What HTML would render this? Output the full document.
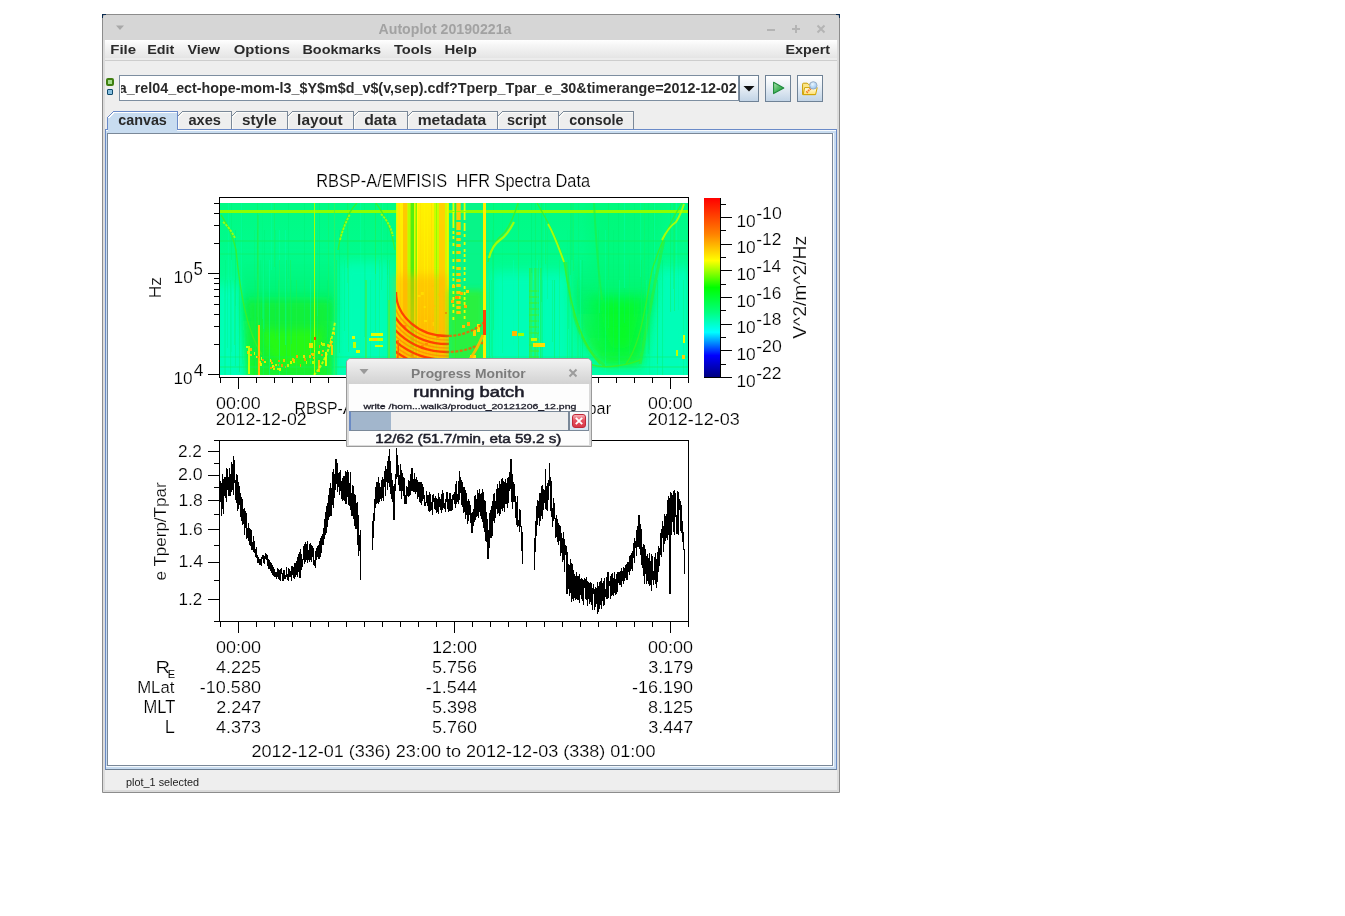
<!DOCTYPE html>
<html><head><meta charset="utf-8"><title>Autoplot 20190221a</title>
<style>
html,body{margin:0;padding:0;background:#fff;}
body{width:1345px;height:916px;position:relative;overflow:hidden;font-family:"Liberation Sans",sans-serif;}
.a{position:absolute;box-sizing:border-box;}
svg{position:absolute;left:0;top:0;overflow:visible;will-change:transform;}
svg text{font-family:"Liberation Sans",sans-serif;white-space:pre;}
</style></head><body>
<div class="a" style="left:102px;top:14px;width:738px;height:779px;border:1px solid #8c8c8c;background:#d6d6d6;border-radius:3px 3px 0 0;"></div><div class="a" style="left:102px;top:14px;width:4px;height:1px;background:#0a2a50"></div><div class="a" style="left:102px;top:14px;width:1px;height:4px;background:#0a2a50"></div><div class="a" style="left:836px;top:14px;width:4px;height:1px;background:#0a2a50"></div><div class="a" style="left:839px;top:14px;width:1px;height:4px;background:#0a2a50"></div><div class="a" style="left:105px;top:40px;width:732px;height:21px;background:linear-gradient(#ffffff,#f6f6f6 25%,#e4e4e4 92%,#ececec 92%);border-bottom:1px solid #cdcdcd"></div><div class="a" style="left:105px;top:61px;width:732px;height:729px;background:#eeeeee"></div><div class="a" style="left:103px;top:40px;width:2px;height:752px;background:#dcdcdc"></div><div class="a" style="left:837px;top:40px;width:2px;height:752px;background:#dcdcdc"></div><div class="a" style="left:103px;top:790px;width:736px;height:2px;background:#dadada"></div><div class="a" style="left:106px;top:78px;width:8px;height:8px;background:#a4dc8c;border:2px solid #3f7f10;border-radius:2px"></div><div class="a" style="left:107px;top:89px;width:6px;height:6px;background:#88c0e0;border:1.5px solid #0e4a6e;border-radius:1px"></div><div class="a" style="left:119px;top:75px;width:620px;height:26px;background:#fff;border:1px solid #7d8ea0;overflow:hidden"></div><div class="a" style="left:739px;top:75px;width:20px;height:27px;background:linear-gradient(#ffffff 0%,#eef3f8 35%,#c2d4e6 100%);border:1px solid #6f8296;"></div><div class="a" style="left:765px;top:75px;width:26px;height:27px;background:linear-gradient(#ffffff 0%,#eef3f8 35%,#c2d4e6 100%);border:1px solid #6f8296;"></div><div class="a" style="left:797px;top:75px;width:26px;height:27px;background:linear-gradient(#ffffff 0%,#eef3f8 35%,#c2d4e6 100%);border:1px solid #6f8296;"></div><div class="a" style="left:105px;top:129px;width:732px;height:641px;background:#c8dcf0;border:1px solid #6a8ac4;border-bottom-color:#6c7e92"></div><div class="a" style="left:106px;top:130px;width:730px;height:1px;background:#f4f8fc"></div><div class="a" style="left:107px;top:133px;width:726px;height:633px;background:#fff;border:1px solid #7a8898"></div><div class="a" style="left:106px;top:766px;width:728px;height:1px;background:#f4f8fc"></div><div class="a" style="left:833px;top:133px;width:1px;height:634px;background:#f4f8fc"></div><div class="a" style="left:105px;top:770px;width:732px;height:20px;background:#eeeeee"></div><svg width="1345" height="916" viewBox="0 0 1345 916"><text transform="translate(378.55,34.00) scale(0.9670,1)" font-size="14.64" font-weight="bold" fill="#a2a2a2">Autoplot 20190221a</text><path d="M767 30h8" stroke="#b4b4b4" stroke-width="2"/><path d="M792 29h8M796 25v8" stroke="#b4b4b4" stroke-width="2"/><path d="M817.5 25.5l7 7M824.5 25.5l-7 7" stroke="#b4b4b4" stroke-width="2"/><path d="M116 25.5h8l-4 4.5z" fill="#a8a8a8"/><text transform="translate(110.23,53.80) scale(1.1500,1)" font-size="13.04" font-weight="bold" fill="#2a2a2a">File</text><text transform="translate(147.17,53.80) scale(1.1013,1)" font-size="13.04" font-weight="bold" fill="#2a2a2a">Edit</text><text transform="translate(187.43,53.80) scale(1.1093,1)" font-size="13.04" font-weight="bold" fill="#2a2a2a">View</text><text transform="translate(233.80,53.80) scale(1.1412,1)" font-size="13.04" font-weight="bold" fill="#2a2a2a">Options</text><text transform="translate(302.46,53.80) scale(1.1055,1)" font-size="13.04" font-weight="bold" fill="#2a2a2a">Bookmarks</text><text transform="translate(393.95,53.80) scale(1.1228,1)" font-size="13.04" font-weight="bold" fill="#2a2a2a">Tools</text><text transform="translate(444.43,53.80) scale(1.1463,1)" font-size="13.04" font-weight="bold" fill="#2a2a2a">Help</text><text transform="translate(785.57,53.80) scale(1.0988,1)" font-size="13.04" font-weight="bold" fill="#2a2a2a">Expert</text><clipPath id="urlclip"><rect x="121" y="76" width="616" height="24"/></clipPath><g clip-path="url(#urlclip)"><text transform="translate(118.77,92.80) scale(1.0085,1)" font-size="14.21" font-weight="bold" fill="#2a2a2a">a_rel04_ect-hope-mom-l3_$Y$m$d_v$(v,sep).cdf?Tperp_Tpar_e_30&amp;timerange=2012-12-02</text></g><path d="M743.5 86h11l-5.5 5.5z" fill="#111"/><defs><linearGradient id="playg" x1="0" y1="0" x2="1" y2="1"><stop offset="0" stop-color="#b8e8b8"/><stop offset="0.5" stop-color="#4cb860"/><stop offset="1" stop-color="#2a9a40"/></linearGradient><linearGradient id="fold" x1="0" y1="0" x2="0" y2="1"><stop offset="0" stop-color="#fffde8"/><stop offset="1" stop-color="#ffe070"/></linearGradient><radialGradient id="lens" cx="0.4" cy="0.35" r="0.7"><stop offset="0" stop-color="#eaf6ff"/><stop offset="1" stop-color="#90c0f0"/></radialGradient></defs><path d="M773.6 82.3 V93.6 L783.8 88 Z" fill="url(#playg)" stroke="#1f8a3c" stroke-width="1.1" stroke-linejoin="round"/><path d="M802.6 94.6 V84.2 Q802.6 83.2 803.6 83.2 H807.2 L808.3 84.3 H815.2 V94.6 Z" fill="#fbe68a" stroke="#c99c00" stroke-width="1"/><path d="M803.2 94.6 L804.6 87.6 H817.2 L815.6 94.6 Z" fill="url(#fold)" stroke="#d2a400" stroke-width="1"/><path d="M806.6 92.6 L810.9 88.3" stroke="#f07a28" stroke-width="2.2" stroke-dasharray="1.4 0.8"/><circle cx="813.3" cy="85.4" r="3.7" fill="url(#lens)" stroke="#98acc4" stroke-width="1"/><g shape-rendering="crispEdges"><path d="M177.5 129 V116.5 L182.5 111.5 H231.5 V129" fill="#eeeeee" stroke="#7a8898" stroke-width="1"/><path d="M178.5 129 V117 L183 112.5 H230.5" fill="none" stroke="#fbfbf8" stroke-width="1"/><path d="M231.5 129 V116.5 L236.5 111.5 H287.5 V129" fill="#eeeeee" stroke="#7a8898" stroke-width="1"/><path d="M232.5 129 V117 L237 112.5 H286.5" fill="none" stroke="#fbfbf8" stroke-width="1"/><path d="M287.5 129 V116.5 L292.5 111.5 H353.5 V129" fill="#eeeeee" stroke="#7a8898" stroke-width="1"/><path d="M288.5 129 V117 L293 112.5 H352.5" fill="none" stroke="#fbfbf8" stroke-width="1"/><path d="M353.5 129 V116.5 L358.5 111.5 H407.5 V129" fill="#eeeeee" stroke="#7a8898" stroke-width="1"/><path d="M354.5 129 V117 L359 112.5 H406.5" fill="none" stroke="#fbfbf8" stroke-width="1"/><path d="M407.5 129 V116.5 L412.5 111.5 H497.5 V129" fill="#eeeeee" stroke="#7a8898" stroke-width="1"/><path d="M408.5 129 V117 L413 112.5 H496.5" fill="none" stroke="#fbfbf8" stroke-width="1"/><path d="M497.5 129 V116.5 L502.5 111.5 H558.5 V129" fill="#eeeeee" stroke="#7a8898" stroke-width="1"/><path d="M498.5 129 V117 L503 112.5 H557.5" fill="none" stroke="#fbfbf8" stroke-width="1"/><path d="M558.5 129 V116.5 L563.5 111.5 H633.5 V129" fill="#eeeeee" stroke="#7a8898" stroke-width="1"/><path d="M559.5 129 V117 L564 112.5 H632.5" fill="none" stroke="#fbfbf8" stroke-width="1"/><path d="M105 129.5 H107.5 V117.5 L113.5 111.5 H177.5 V129.5 H837" fill="#c8dcf0" stroke="#6a8ac8" stroke-width="1"/><path d="M108.5 130 V118 L114 112.5 H176.5" fill="none" stroke="#ffffff" stroke-width="1"/><rect x="108" y="118" width="69" height="15" fill="#c8dcf0"/><path d="M106 130.5 H108 M178 130.5 H836" stroke="#f8fbfe" stroke-width="1"/></g><text transform="translate(118.23,124.90) scale(1.0419,1)" font-size="13.77" font-weight="bold" fill="#2a2a2a">canvas</text><text transform="translate(188.46,124.90) scale(1.0612,1)" font-size="13.77" font-weight="bold" fill="#2a2a2a">axes</text><text transform="translate(241.96,124.90) scale(1.1104,1)" font-size="13.77" font-weight="bold" fill="#2a2a2a">style</text><text transform="translate(297.12,124.90) scale(1.1246,1)" font-size="13.77" font-weight="bold" fill="#2a2a2a">layout</text><text transform="translate(364.17,124.90) scale(1.1437,1)" font-size="13.77" font-weight="bold" fill="#2a2a2a">data</text><text transform="translate(417.68,124.90) scale(1.1355,1)" font-size="13.77" font-weight="bold" fill="#2a2a2a">metadata</text><text transform="translate(506.89,124.90) scale(1.0558,1)" font-size="13.77" font-weight="bold" fill="#2a2a2a">script</text><text transform="translate(569.33,124.90) scale(1.0405,1)" font-size="13.77" font-weight="bold" fill="#2a2a2a">console</text><text transform="translate(126.09,786.10) scale(1.0091,1)" font-size="10.76" font-weight="normal" fill="#222">plot_1 selected</text></svg><svg width="1345" height="916" viewBox="0 0 1345 916" shape-rendering="crispEdges"><defs><linearGradient id="cb" x1="0" y1="0" x2="0" y2="1"><stop offset="0" stop-color="#ff0000"/><stop offset="0.2" stop-color="#ff8000"/><stop offset="0.35" stop-color="#ffff00"/><stop offset="0.5" stop-color="#00ff00"/><stop offset="0.64" stop-color="#00ff80"/><stop offset="0.75" stop-color="#00ffff"/><stop offset="0.88" stop-color="#0000ff"/><stop offset="1" stop-color="#000080"/></linearGradient></defs><rect x="220" y="203" width="468" height="172" fill="#00fa90"/><defs><clipPath id="spc"><rect x="220" y="203" width="468" height="172"/></clipPath><filter id="b1" x="-50%" y="-50%" width="200%" height="200%"><feGaussianBlur stdDeviation="0.7"/></filter><filter id="b2" x="-50%" y="-50%" width="200%" height="200%"><feGaussianBlur stdDeviation="1.5"/></filter><filter id="b3" x="-50%" y="-50%" width="200%" height="200%"><feGaussianBlur stdDeviation="3"/></filter><filter id="b4" x="-50%" y="-50%" width="200%" height="200%"><feGaussianBlur stdDeviation="4"/></filter><filter id="b6" x="-50%" y="-50%" width="200%" height="200%"><feGaussianBlur stdDeviation="6"/></filter><filter id="b8" x="-50%" y="-50%" width="200%" height="200%"><feGaussianBlur stdDeviation="8"/></filter><linearGradient id="bgv" x1="0" y1="0" x2="0" y2="1"><stop offset="0" stop-color="#00fb84"/><stop offset="0.4" stop-color="#00fc90"/><stop offset="1" stop-color="#00fea8"/></linearGradient><linearGradient id="u1" x1="0" y1="0" x2="0" y2="1"><stop offset="0" stop-color="#00f270" stop-opacity="0"/><stop offset="0.4" stop-color="#00f060" stop-opacity="0.8"/><stop offset="1" stop-color="#20f820"/></linearGradient><linearGradient id="bandtop" x1="0" y1="0" x2="0" y2="1"><stop offset="0" stop-color="#fff200"/><stop offset="0.5" stop-color="#ffdc00"/><stop offset="1" stop-color="#ffb400"/></linearGradient></defs><g clip-path="url(#spc)" shape-rendering="auto"><rect x="220" y="203" width="468" height="172" fill="url(#bgv)"/><rect x="214" y="285" width="28" height="100" fill="#00ffbc" filter="url(#b6)" opacity="0.9"/><rect x="340" y="262" width="52" height="120" fill="#00ffbc" filter="url(#b6)" opacity="0.8"/><rect x="490" y="272" width="78" height="110" fill="#00ffbc" filter="url(#b6)" opacity="0.85"/><rect x="652" y="268" width="40" height="115" fill="#00ffbc" filter="url(#b6)" opacity="0.9"/><path d="M238 250 C242 310 244 345 248 380 L332 380 C334 325 336 300 338 250 Z" fill="url(#u1)" filter="url(#b3)"/><path d="M246 300 C250 340 252 360 254 380 L328 380 C330 335 332 320 332 300 Z" fill="#18f030" filter="url(#b4)" opacity="0.8"/><path d="M262 330 C265 350 272 362 285 366 L305 366 L316 352 C320 345 322 338 322 330 Z" fill="#30ff00" filter="url(#b4)" opacity="0.6"/><path d="M568 250 C572 310 580 348 606 366 L640 366 C648 340 652 300 664 250 Z" fill="url(#u1)" filter="url(#b4)" opacity="0.85"/><path d="M585 203 L662 203 C660 240 655 280 650 300 L592 300 C590 270 588 240 585 203 Z" fill="#00f870" filter="url(#b6)" opacity="0.45"/><path d="M588 295 C592 330 598 352 610 362 L638 358 C644 335 648 315 652 295 Z" fill="#00f840" filter="url(#b6)" opacity="0.6"/><path d="M600 300 C604 330 608 345 616 350 L630 346 C634 335 638 318 640 300 Z" fill="#10ff00" filter="url(#b6)" opacity="0.45"/><path d="M566 262 C570 310 578 345 605 366" stroke="#30f030" stroke-width="3" fill="none" opacity="0.6" filter="url(#b1)"/><path d="M664 240 C655 280 648 320 640 364" stroke="#30f030" stroke-width="3" fill="none" opacity="0.6" filter="url(#b1)"/><rect x="529" y="268" width="1.5" height="107" fill="#30f040" opacity="0.6"/><rect x="531" y="268" width="1.5" height="107" fill="#30f040" opacity="0.6"/><rect x="534" y="268" width="1.5" height="107" fill="#30f040" opacity="0.6"/><rect x="537" y="268" width="1.5" height="107" fill="#30f040" opacity="0.6"/><rect x="540" y="268" width="1.5" height="107" fill="#30f040" opacity="0.6"/><rect x="529" y="290" width="10" height="2" fill="#40f030" opacity="0.6"/><rect x="529" y="296" width="10" height="2" fill="#40f030" opacity="0.6"/><rect x="529" y="302" width="10" height="2" fill="#40f030" opacity="0.6"/><rect x="529" y="308" width="10" height="2" fill="#40f030" opacity="0.6"/><rect x="529" y="314" width="10" height="2" fill="#40f030" opacity="0.6"/><rect x="529" y="320" width="10" height="2" fill="#40f030" opacity="0.6"/><rect x="529" y="326" width="10" height="2" fill="#40f030" opacity="0.6"/><rect x="529" y="332" width="10" height="2" fill="#40f030" opacity="0.6"/><rect x="529" y="338" width="10" height="2" fill="#40f030" opacity="0.6"/><rect x="529" y="344" width="10" height="2" fill="#40f030" opacity="0.6"/><rect x="529" y="350" width="10" height="2" fill="#40f030" opacity="0.6"/><rect x="529" y="356" width="10" height="2" fill="#40f030" opacity="0.6"/><rect x="529" y="362" width="10" height="2" fill="#40f030" opacity="0.6"/><rect x="529" y="368" width="10" height="2" fill="#40f030" opacity="0.6"/><rect x="663" y="280" width="1" height="169" fill="#00ffb0" opacity="0.35"/><rect x="657" y="280" width="1" height="84" fill="#10f060" opacity="0.45"/><rect x="542" y="280" width="1" height="161" fill="#10f060" opacity="0.25"/><rect x="375" y="203" width="1" height="71" fill="#20f050" opacity="0.45"/><rect x="544" y="203" width="1" height="136" fill="#00ffb0" opacity="0.35"/><rect x="554" y="280" width="1" height="143" fill="#10f060" opacity="0.45"/><rect x="227" y="280" width="1" height="68" fill="#00f070" opacity="0.25"/><rect x="317" y="203" width="1" height="136" fill="#00f070" opacity="0.35"/><rect x="387" y="260" width="1" height="135" fill="#10f060" opacity="0.45"/><rect x="339" y="230" width="1" height="123" fill="#00f070" opacity="0.45"/><rect x="263" y="260" width="1" height="143" fill="#00f880" opacity="0.35"/><rect x="502" y="203" width="1" height="150" fill="#00f880" opacity="0.35"/><rect x="608" y="203" width="1" height="125" fill="#00f880" opacity="0.25"/><rect x="255" y="280" width="1" height="158" fill="#00f070" opacity="0.35"/><rect x="275" y="230" width="1" height="109" fill="#00f070" opacity="0.25"/><rect x="653" y="203" width="1" height="87" fill="#10f060" opacity="0.25"/><rect x="582" y="260" width="1" height="113" fill="#00f070" opacity="0.45"/><rect x="542" y="203" width="1" height="159" fill="#00f880" opacity="0.35"/><rect x="264" y="230" width="1" height="102" fill="#00f070" opacity="0.35"/><rect x="608" y="203" width="1" height="77" fill="#10f060" opacity="0.45"/><rect x="271" y="203" width="1" height="67" fill="#00ffb0" opacity="0.35"/><rect x="310" y="280" width="1" height="84" fill="#00ffb0" opacity="0.45"/><rect x="317" y="203" width="1" height="113" fill="#00ffb0" opacity="0.25"/><rect x="328" y="203" width="1" height="94" fill="#20f050" opacity="0.35"/><rect x="673" y="203" width="1" height="86" fill="#10f060" opacity="0.35"/><rect x="657" y="280" width="1" height="142" fill="#20f050" opacity="0.25"/><rect x="241" y="203" width="1" height="87" fill="#00ffb0" opacity="0.35"/><rect x="224" y="280" width="1" height="102" fill="#00f880" opacity="0.35"/><rect x="257" y="203" width="1" height="71" fill="#10f060" opacity="0.45"/><rect x="545" y="203" width="1" height="61" fill="#20f050" opacity="0.35"/><rect x="538" y="260" width="1" height="76" fill="#20f050" opacity="0.35"/><rect x="646" y="280" width="1" height="77" fill="#00ffb0" opacity="0.25"/><rect x="541" y="203" width="1" height="99" fill="#10f060" opacity="0.45"/><rect x="347" y="203" width="1" height="80" fill="#20f050" opacity="0.25"/><rect x="571" y="260" width="1" height="172" fill="#00ffb0" opacity="0.45"/><rect x="260" y="260" width="1" height="66" fill="#00f070" opacity="0.25"/><rect x="239" y="280" width="1" height="92" fill="#10f060" opacity="0.45"/><rect x="580" y="260" width="1" height="92" fill="#00ffb0" opacity="0.45"/><rect x="370" y="280" width="1" height="82" fill="#00f070" opacity="0.25"/><rect x="336" y="260" width="1" height="131" fill="#20f050" opacity="0.45"/><rect x="257" y="230" width="1" height="87" fill="#10f060" opacity="0.45"/><rect x="228" y="203" width="1" height="94" fill="#00ffb0" opacity="0.35"/><rect x="347" y="203" width="1" height="65" fill="#10f060" opacity="0.35"/><rect x="491" y="280" width="1" height="76" fill="#00f070" opacity="0.35"/><rect x="290" y="260" width="1" height="102" fill="#20f050" opacity="0.45"/><rect x="291" y="280" width="1" height="64" fill="#00f070" opacity="0.35"/><rect x="686" y="230" width="1" height="149" fill="#00f880" opacity="0.25"/><rect x="230" y="280" width="1" height="141" fill="#00f070" opacity="0.35"/><rect x="254" y="230" width="1" height="100" fill="#10f060" opacity="0.25"/><rect x="258" y="260" width="1" height="129" fill="#00f880" opacity="0.45"/><rect x="242" y="203" width="1" height="161" fill="#00f880" opacity="0.35"/><rect x="263" y="260" width="1" height="69" fill="#00ffb0" opacity="0.25"/><rect x="662" y="260" width="1" height="133" fill="#00f070" opacity="0.45"/><rect x="559" y="260" width="1" height="108" fill="#20f050" opacity="0.25"/><rect x="531" y="203" width="1" height="70" fill="#00f070" opacity="0.45"/><rect x="279" y="230" width="1" height="172" fill="#00ffb0" opacity="0.45"/><rect x="389" y="260" width="1" height="154" fill="#20f050" opacity="0.35"/><rect x="649" y="280" width="1" height="70" fill="#20f050" opacity="0.45"/><rect x="235" y="230" width="1" height="136" fill="#00f070" opacity="0.35"/><rect x="231" y="203" width="1" height="149" fill="#00f070" opacity="0.35"/><rect x="619" y="280" width="1" height="144" fill="#00ffb0" opacity="0.35"/><rect x="678" y="203" width="1" height="107" fill="#00f880" opacity="0.25"/><rect x="567" y="280" width="1" height="85" fill="#20f050" opacity="0.25"/><rect x="605" y="230" width="1" height="144" fill="#00ffb0" opacity="0.35"/><rect x="676" y="203" width="1" height="101" fill="#00ffb0" opacity="0.45"/><rect x="348" y="203" width="1" height="141" fill="#00ffb0" opacity="0.25"/><rect x="670" y="203" width="1" height="109" fill="#10f060" opacity="0.45"/><rect x="382" y="203" width="1" height="77" fill="#10f060" opacity="0.35"/><rect x="648" y="203" width="1" height="151" fill="#00f070" opacity="0.35"/><rect x="640" y="203" width="1" height="74" fill="#00ffb0" opacity="0.35"/><rect x="360" y="203" width="1" height="166" fill="#00ffb0" opacity="0.35"/><rect x="540" y="280" width="1" height="123" fill="#00f880" opacity="0.45"/><rect x="649" y="280" width="1" height="117" fill="#00f880" opacity="0.25"/><rect x="644" y="203" width="1" height="95" fill="#20f050" opacity="0.25"/><rect x="567" y="230" width="1" height="133" fill="#00f880" opacity="0.35"/><rect x="552" y="280" width="1" height="62" fill="#10f060" opacity="0.35"/><rect x="317" y="203" width="1" height="158" fill="#00f880" opacity="0.25"/><rect x="618" y="203" width="1" height="161" fill="#00f070" opacity="0.45"/><rect x="279" y="260" width="1" height="73" fill="#20f050" opacity="0.45"/><rect x="547" y="230" width="1" height="69" fill="#10f060" opacity="0.25"/><rect x="641" y="260" width="1" height="92" fill="#10f060" opacity="0.45"/><rect x="225" y="260" width="1" height="128" fill="#00f070" opacity="0.25"/><rect x="335" y="230" width="1" height="159" fill="#00f880" opacity="0.45"/><rect x="577" y="280" width="1" height="124" fill="#20f050" opacity="0.25"/><rect x="654" y="203" width="1" height="71" fill="#00ffb0" opacity="0.45"/><rect x="286" y="260" width="1" height="118" fill="#10f060" opacity="0.45"/><rect x="674" y="203" width="1" height="108" fill="#20f050" opacity="0.45"/><rect x="554" y="280" width="1" height="161" fill="#00f880" opacity="0.35"/><rect x="387" y="203" width="1" height="72" fill="#00f070" opacity="0.25"/><rect x="344" y="260" width="1" height="71" fill="#00f880" opacity="0.45"/><rect x="624" y="230" width="1" height="93" fill="#00f070" opacity="0.35"/><rect x="262" y="203" width="1" height="116" fill="#00f880" opacity="0.45"/><rect x="613" y="230" width="1" height="122" fill="#00f070" opacity="0.25"/><rect x="634" y="203" width="1" height="114" fill="#00f070" opacity="0.25"/><rect x="492" y="230" width="1" height="147" fill="#10f060" opacity="0.35"/><rect x="296" y="280" width="1" height="152" fill="#20f050" opacity="0.45"/><rect x="572" y="260" width="1" height="172" fill="#00ffb0" opacity="0.45"/><rect x="572" y="203" width="1" height="157" fill="#10f060" opacity="0.35"/><rect x="489" y="280" width="1" height="97" fill="#20f050" opacity="0.45"/><rect x="304" y="280" width="1" height="125" fill="#20f050" opacity="0.35"/><rect x="379" y="260" width="1" height="168" fill="#20f050" opacity="0.25"/><rect x="375" y="203" width="1" height="129" fill="#20f050" opacity="0.35"/><rect x="513" y="260" width="1" height="85" fill="#00ffb0" opacity="0.45"/><rect x="278" y="280" width="1" height="60" fill="#20f050" opacity="0.35"/><rect x="234" y="280" width="1" height="65" fill="#20f050" opacity="0.35"/><rect x="498" y="280" width="1" height="75" fill="#00ffb0" opacity="0.25"/><rect x="573" y="203" width="1" height="68" fill="#20f050" opacity="0.35"/><rect x="629" y="260" width="1" height="94" fill="#10f060" opacity="0.35"/><rect x="285" y="230" width="1" height="115" fill="#00ffb0" opacity="0.45"/><rect x="382" y="203" width="1" height="84" fill="#00ffb0" opacity="0.45"/><rect x="235" y="230" width="1" height="76" fill="#00f070" opacity="0.25"/><rect x="319" y="203" width="1" height="89" fill="#00f070" opacity="0.45"/><rect x="365" y="230" width="1" height="152" fill="#00f880" opacity="0.25"/><rect x="537" y="260" width="1" height="73" fill="#00ffb0" opacity="0.45"/><rect x="518" y="203" width="1" height="169" fill="#20f050" opacity="0.45"/><rect x="348" y="203" width="1" height="149" fill="#20f050" opacity="0.35"/><rect x="231" y="260" width="1" height="141" fill="#00ffb0" opacity="0.45"/><rect x="535" y="203" width="1" height="128" fill="#10f060" opacity="0.45"/><rect x="493" y="203" width="1" height="127" fill="#10f060" opacity="0.45"/><rect x="533" y="280" width="1" height="169" fill="#10f060" opacity="0.25"/><rect x="599" y="230" width="1" height="83" fill="#00f880" opacity="0.45"/><rect x="381" y="203" width="1" height="87" fill="#10f060" opacity="0.25"/><rect x="288" y="203" width="1" height="76" fill="#00f070" opacity="0.35"/><rect x="269" y="260" width="1" height="166" fill="#00ffb0" opacity="0.45"/><rect x="624" y="203" width="1" height="85" fill="#00ffb0" opacity="0.45"/><rect x="570" y="203" width="1" height="72" fill="#10f060" opacity="0.45"/><rect x="569" y="230" width="1" height="165" fill="#00f880" opacity="0.25"/><rect x="580" y="280" width="1" height="141" fill="#00f880" opacity="0.45"/><rect x="571" y="203" width="1" height="162" fill="#00f070" opacity="0.35"/><rect x="274" y="203" width="1" height="64" fill="#20f050" opacity="0.45"/><rect x="683" y="280" width="1" height="121" fill="#10f060" opacity="0.25"/><rect x="314" y="203" width="1" height="86" fill="#10f060" opacity="0.25"/><rect x="364" y="203" width="1" height="134" fill="#00f070" opacity="0.25"/><rect x="568" y="260" width="1" height="69" fill="#00f070" opacity="0.35"/><rect x="327" y="280" width="1" height="107" fill="#00f070" opacity="0.45"/><rect x="578" y="203" width="1" height="168" fill="#10f060" opacity="0.25"/><rect x="598" y="230" width="1" height="111" fill="#10f060" opacity="0.45"/><rect x="304" y="203" width="1" height="125" fill="#00f070" opacity="0.35"/><rect x="220" y="240" width="468" height="2" fill="#10f060" opacity="0.5"/><rect x="220" y="253" width="468" height="2" fill="#10f060" opacity="0.3"/><rect x="220" y="356" width="468" height="2" fill="#10f060" opacity="0.25"/><rect x="220" y="366" width="468" height="2" fill="#10f060" opacity="0.35"/><rect x="220" y="210" width="468" height="3" fill="#8cff00"/><path d="M221 215 C226 222 232 232 236 250 C240 290 246 330 262 355" stroke="#40f020" stroke-width="1.4" fill="none" opacity="0.8"/><path d="M223 222 C228 226 232 232 235 238" stroke="#b0ff00" stroke-width="1.8" fill="none" opacity="0.9" stroke-dasharray="2.5 1"/><path d="M338 250 C342 225 350 210 357 203" stroke="#40f020" stroke-width="1.4" fill="none" opacity="0.8"/><path d="M340 240 C343 228 347 220 350 214" stroke="#b0ff00" stroke-width="1.8" fill="none" opacity="0.9" stroke-dasharray="2.5 1"/><path d="M376 203 C382 212 390 222 395 250" stroke="#40f020" stroke-width="1.4" fill="none" opacity="0.8"/><path d="M381 214 C385 218 390 224 393 236" stroke="#b0ff00" stroke-width="1.8" fill="none" opacity="0.9" stroke-dasharray="2.5 1"/><path d="M488 262 C490 250 495 240 505 232 C512 222 516 210 518 203" stroke="#40f020" stroke-width="1.4" fill="none" opacity="0.8"/><path d="M489 258 C491 250 494 244 500 240 C506 236 510 230 514 222" stroke="#b0ff00" stroke-width="2.2" fill="none" opacity="0.9"/><path d="M537 203 C548 222 558 240 564 262 C570 300 578 340 600 364" stroke="#40f020" stroke-width="1.4" fill="none" opacity="0.8"/><path d="M548 224 C554 234 558 246 564 262" stroke="#b8ff00" stroke-width="1.8" fill="none" opacity="0.9"/><path d="M682 203 C670 222 660 245 652 270 C645 310 640 345 626 364" stroke="#40f020" stroke-width="1.4" fill="none" opacity="0.8"/><path d="M662 240 C666 232 670 226 676 222 C680 216 682 210 684 204" stroke="#b8ff00" stroke-width="2" fill="none" opacity="0.9"/><path d="M594 203 C596 240 598 270 602 300" stroke="#20f040" stroke-width="2" fill="none" opacity="0.6"/><path d="M530 268 L530 375 M536 268 L536 375" stroke="#30f040" stroke-width="1.2" fill="none" opacity="0.7"/><path d="M590 364 C600 368 620 368 640 360" stroke="#40f020" stroke-width="1.5" fill="none" opacity="0.8"/><rect x="314" y="203" width="1" height="172" fill="#a8ff00"/><rect x="257" y="215" width="2" height="160" fill="#30f030" opacity="0.35"/><rect x="258" y="325" width="2" height="50" fill="#ffc000" filter="url(#b1)"/><rect x="334" y="203" width="1" height="172" fill="#40f050" opacity="0.6"/><rect x="300" y="364" width="1" height="3" fill="#ff9800" opacity="0.9"/><rect x="314" y="350" width="1" height="2" fill="#ffe000" opacity="0.9"/><rect x="277" y="368" width="2" height="2" fill="#c8ff00" opacity="0.9"/><rect x="296" y="355" width="2" height="3" fill="#e8ff00" opacity="0.9"/><rect x="260" y="362" width="1" height="2" fill="#c8ff00" opacity="0.9"/><rect x="256" y="356" width="1" height="2" fill="#e8ff00" opacity="0.9"/><rect x="332" y="332" width="1" height="2" fill="#e8ff00" opacity="0.9"/><rect x="270" y="367" width="2" height="2" fill="#ff9800" opacity="0.9"/><rect x="260" y="363" width="2" height="3" fill="#e8ff00" opacity="0.9"/><rect x="246" y="346" width="2" height="2" fill="#e8ff00" opacity="0.9"/><rect x="274" y="366" width="1" height="3" fill="#ff9800" opacity="0.9"/><rect x="250" y="348" width="2" height="3" fill="#ffc000" opacity="0.9"/><rect x="261" y="357" width="1" height="3" fill="#e8ff00" opacity="0.9"/><rect x="332" y="332" width="2" height="2" fill="#ffc000" opacity="0.9"/><rect x="293" y="361" width="2" height="2" fill="#c8ff00" opacity="0.9"/><rect x="285" y="366" width="1" height="2" fill="#ff9800" opacity="0.9"/><rect x="312" y="361" width="2" height="3" fill="#c8ff00" opacity="0.9"/><rect x="324" y="343" width="1" height="3" fill="#c8ff00" opacity="0.9"/><rect x="321" y="342" width="1" height="3" fill="#ffe000" opacity="0.9"/><rect x="290" y="361" width="2" height="3" fill="#e8ff00" opacity="0.9"/><rect x="327" y="344" width="2" height="3" fill="#ffc000" opacity="0.9"/><rect x="272" y="365" width="2" height="3" fill="#e8ff00" opacity="0.9"/><rect x="334" y="332" width="1" height="3" fill="#ffe000" opacity="0.9"/><rect x="247" y="351" width="2" height="3" fill="#ffc000" opacity="0.9"/><rect x="303" y="355" width="2" height="3" fill="#ffe000" opacity="0.9"/><rect x="319" y="345" width="1" height="3" fill="#ff9800" opacity="0.9"/><rect x="254" y="352" width="1" height="3" fill="#e8ff00" opacity="0.9"/><rect x="271" y="360" width="1" height="3" fill="#ff9800" opacity="0.9"/><rect x="330" y="343" width="2" height="3" fill="#ffc000" opacity="0.9"/><rect x="270" y="359" width="1" height="3" fill="#e8ff00" opacity="0.9"/><rect x="318" y="351" width="2" height="3" fill="#e8ff00" opacity="0.9"/><rect x="322" y="343" width="2" height="3" fill="#c8ff00" opacity="0.9"/><rect x="250" y="354" width="2" height="2" fill="#ffc000" opacity="0.9"/><rect x="312" y="353" width="2" height="3" fill="#ffc000" opacity="0.9"/><rect x="313" y="357" width="2" height="2" fill="#ffc000" opacity="0.9"/><rect x="296" y="355" width="2" height="3" fill="#ff9800" opacity="0.9"/><rect x="304" y="358" width="2" height="3" fill="#ff9800" opacity="0.9"/><rect x="275" y="364" width="2" height="2" fill="#c8ff00" opacity="0.9"/><rect x="322" y="350" width="2" height="2" fill="#ffc000" opacity="0.9"/><rect x="292" y="358" width="2" height="3" fill="#ffc000" opacity="0.9"/><rect x="306" y="361" width="1" height="3" fill="#c8ff00" opacity="0.9"/><rect x="271" y="362" width="2" height="2" fill="#ffc000" opacity="0.9"/><rect x="262" y="359" width="2" height="2" fill="#ff9800" opacity="0.9"/><rect x="264" y="361" width="2" height="2" fill="#ffe000" opacity="0.9"/><rect x="259" y="361" width="2" height="2" fill="#ffe000" opacity="0.9"/><rect x="287" y="364" width="2" height="3" fill="#c8ff00" opacity="0.9"/><rect x="278" y="364" width="1" height="2" fill="#ff9800" opacity="0.9"/><rect x="309" y="355" width="2" height="3" fill="#ffc000" opacity="0.9"/><rect x="321" y="354" width="2" height="2" fill="#ff9800" opacity="0.9"/><rect x="293" y="359" width="2" height="3" fill="#ffc000" opacity="0.9"/><rect x="330" y="338" width="1" height="3" fill="#ffc000" opacity="0.9"/><rect x="281" y="364" width="2" height="3" fill="#ff9800" opacity="0.9"/><rect x="257" y="356" width="2" height="2" fill="#ff9800" opacity="0.9"/><rect x="331" y="341" width="2" height="2" fill="#ffc000" opacity="0.9"/><rect x="278" y="360" width="2" height="2" fill="#ff9800" opacity="0.9"/><rect x="273" y="367" width="2" height="3" fill="#ff9800" opacity="0.9"/><rect x="283" y="359" width="2" height="3" fill="#ffc000" opacity="0.9"/><rect x="279" y="368" width="2" height="3" fill="#e8ff00" opacity="0.9"/><rect x="311" y="353" width="2" height="2" fill="#ffc000" opacity="0.9"/><rect x="273" y="368" width="2" height="2" fill="#c8ff00" opacity="0.9"/><rect x="314" y="337" width="2" height="3" fill="#ff3000" opacity="0.9"/><rect x="309" y="343" width="4" height="5" fill="#ffe000" opacity="0.9"/><rect x="248" y="346" width="2" height="28" fill="#d0ff00" opacity="0.9"/><rect x="318" y="360" width="2" height="12" fill="#ffc000" opacity="0.9"/><rect x="325" y="352" width="2" height="14" fill="#e8ff00" opacity="0.9"/><rect x="331" y="345" width="2" height="10" fill="#ffd000" opacity="0.9"/><path d="M314 375 C322 366 330 352 335 322" stroke="#e8ff00" stroke-width="2" fill="none" opacity="0.8" stroke-dasharray="3 1.5"/><rect x="352" y="336" width="3" height="3" fill="#e0ff00"/><rect x="353" y="342" width="3" height="6" fill="#c0ff00"/><rect x="356" y="350" width="4" height="3" fill="#e0ff00"/><rect x="512" y="331" width="5" height="5" fill="#ffb800"/><rect x="518" y="333" width="6" height="3" fill="#a0ff00"/><rect x="533" y="343" width="12" height="4" fill="#ffe000"/><rect x="531" y="338" width="6" height="3" fill="#c8ff00"/><rect x="544" y="372" width="2" height="3" fill="#ffd000"/><rect x="683" y="335" width="2" height="8" fill="#e0ff00"/><rect x="682" y="355" width="3" height="4" fill="#ffd000"/><rect x="676" y="350" width="2" height="6" fill="#c0ff00"/><rect x="371" y="333" width="12" height="3" fill="#e0ff00"/><rect x="369" y="338" width="14" height="3" fill="#c0ff00"/><rect x="375" y="345" width="8" height="2" fill="#d0ff00"/><rect x="373" y="338" width="4" height="3" fill="#ffd000"/><rect x="365" y="280" width="2" height="95" fill="#40f040" opacity="0.6"/><rect x="388" y="300" width="2" height="75" fill="#60f020" opacity="0.6"/><rect x="396" y="203" width="53" height="172" fill="url(#bandtop)"/><linearGradient id="sfade" x1="0" y1="0" x2="0" y2="1"><stop offset="0" stop-color="#fff" stop-opacity="1"/><stop offset="0.5" stop-color="#fff" stop-opacity="1"/><stop offset="1" stop-color="#fff" stop-opacity="0.25"/></linearGradient><mask id="smask"><rect x="396" y="203" width="53" height="172" fill="url(#sfade)"/></mask><g mask="url(#smask)"><rect x="396" y="203" width="1.5" height="172" fill="#c8ff00" opacity="0.9"/><rect x="398" y="203" width="2" height="172" fill="#ffe400" opacity="0.8"/><rect x="401" y="203" width="2" height="172" fill="#fff000" opacity="0.7"/><rect x="403" y="203" width="4.5" height="172" fill="#ffc000" opacity="0.8"/><rect x="407.5" y="203" width="3" height="172" fill="#b0ff00" opacity="0.9"/><rect x="410.5" y="203" width="3.5" height="172" fill="#40f010" opacity="0.9"/><rect x="414" y="203" width="1.2" height="172" fill="#e0ff00" opacity="0.9"/><rect x="415.5" y="203" width="1.5" height="172" fill="#70f800" opacity="0.9"/><rect x="417" y="203" width="1" height="172" fill="#ffff00" opacity="0.9"/><rect x="420" y="203" width="1" height="172" fill="#ffe000" opacity="0.5"/><rect x="424" y="203" width="1" height="172" fill="#fff800" opacity="0.5"/><rect x="427" y="203" width="1" height="172" fill="#fff400" opacity="0.6"/><rect x="431" y="203" width="1" height="172" fill="#ffd800" opacity="0.6"/><rect x="434" y="203" width="5" height="172" fill="#c0ff00" opacity="0.85"/><rect x="436" y="203" width="1" height="172" fill="#80ff00" opacity="0.7"/><rect x="439" y="203" width="6" height="172" fill="#ffcc00" opacity="0.85"/><rect x="445" y="203" width="4" height="172" fill="#c8ff00" opacity="0.85"/><rect x="447" y="203" width="1" height="172" fill="#ffee00" opacity="0.7"/></g><rect x="396" y="275" width="53" height="100" fill="#ffb000" filter="url(#b4)" opacity="0.45"/><rect x="420.8" y="292" width="3" height="3" fill="#ffe000" opacity="0.8"/><rect x="411.2" y="354" width="2" height="2" fill="#ff8000" opacity="0.8"/><rect x="423.7" y="306" width="2" height="2" fill="#ffe000" opacity="0.8"/><rect x="421.5" y="360" width="3" height="3" fill="#ff8000" opacity="0.8"/><rect x="421.6" y="374" width="3" height="4" fill="#ffc000" opacity="0.8"/><rect x="441.8" y="365" width="1" height="2" fill="#ff8000" opacity="0.8"/><rect x="410.7" y="347" width="3" height="3" fill="#ffc000" opacity="0.8"/><rect x="423.6" y="324" width="2" height="4" fill="#ffc000" opacity="0.8"/><rect x="438.3" y="293" width="1" height="3" fill="#ffc000" opacity="0.8"/><rect x="419.7" y="367" width="3" height="4" fill="#ffe000" opacity="0.8"/><rect x="396.8" y="354" width="2" height="4" fill="#ffc000" opacity="0.8"/><rect x="431.8" y="371" width="3" height="3" fill="#ff8000" opacity="0.8"/><rect x="420.7" y="345" width="3" height="2" fill="#ff8000" opacity="0.8"/><rect x="420.2" y="352" width="2" height="2" fill="#ffc000" opacity="0.8"/><rect x="436.5" y="335" width="3" height="3" fill="#ff8000" opacity="0.8"/><rect x="403.4" y="325" width="3" height="3" fill="#ff8000" opacity="0.8"/><rect x="424.0" y="320" width="3" height="2" fill="#ffe000" opacity="0.8"/><rect x="434.1" y="305" width="1" height="2" fill="#ffc000" opacity="0.8"/><rect x="445.0" y="312" width="2" height="2" fill="#ff8000" opacity="0.8"/><rect x="432.5" y="285" width="1" height="2" fill="#ffc000" opacity="0.8"/><rect x="429.6" y="370" width="3" height="2" fill="#ff8000" opacity="0.8"/><rect x="432.7" y="322" width="1" height="4" fill="#ffe000" opacity="0.8"/><rect x="417.5" y="295" width="3" height="2" fill="#ffe000" opacity="0.8"/><rect x="424.9" y="343" width="3" height="2" fill="#ff8000" opacity="0.8"/><rect x="399.0" y="335" width="3" height="3" fill="#ffc000" opacity="0.8"/><clipPath id="bandclip"><rect x="396" y="203" width="53" height="172"/></clipPath><g clip-path="url(#bandclip)"><path d="M396.0 292 A51.0 44.0 0 0 0 498.0 292" fill="none" stroke="#ff3400" stroke-width="2.3" opacity="0.9"/><path d="M392.0 292 A55.0 48.0 0 0 0 502.0 292" fill="none" stroke="#ff8c00" stroke-width="1.5" opacity="0.75"/><path d="M388.0 292 A59.0 52.0 0 0 0 506.0 292" fill="none" stroke="#ff3400" stroke-width="2.3" opacity="0.9"/><path d="M384.0 292 A63.0 56.0 0 0 0 510.0 292" fill="none" stroke="#ff8c00" stroke-width="1.5" opacity="0.75"/><path d="M380.0 292 A67.0 60.0 0 0 0 514.0 292" fill="none" stroke="#ff3400" stroke-width="2.3" opacity="0.9"/><path d="M376.0 292 A71.0 64.0 0 0 0 518.0 292" fill="none" stroke="#ff8c00" stroke-width="1.5" opacity="0.75"/><path d="M372.0 292 A75.0 68.0 0 0 0 522.0 292" fill="none" stroke="#ff3400" stroke-width="2.3" opacity="0.9"/><path d="M368.0 292 A79.0 72.0 0 0 0 526.0 292" fill="none" stroke="#ff8c00" stroke-width="1.5" opacity="0.75"/><path d="M364.0 292 A83.0 76.0 0 0 0 530.0 292" fill="none" stroke="#ff3400" stroke-width="2.3" opacity="0.9"/><path d="M360.0 292 A87.0 80.0 0 0 0 534.0 292" fill="none" stroke="#ff8c00" stroke-width="1.5" opacity="0.75"/><path d="M356.0 292 A91.0 84.0 0 0 0 538.0 292" fill="none" stroke="#ff3400" stroke-width="2.3" opacity="0.9"/><path d="M352.0 292 A95.0 88.0 0 0 0 542.0 292" fill="none" stroke="#ff8c00" stroke-width="1.5" opacity="0.75"/><path d="M348.0 292 A99.0 92.0 0 0 0 546.0 292" fill="none" stroke="#ff3400" stroke-width="2.3" opacity="0.9"/><path d="M344.0 292 A103.0 96.0 0 0 0 550.0 292" fill="none" stroke="#ff8c00" stroke-width="1.5" opacity="0.75"/><path d="M340.0 292 A107.0 100.0 0 0 0 554.0 292" fill="none" stroke="#ff3400" stroke-width="2.3" opacity="0.9"/><path d="M336.0 292 A111.0 104.0 0 0 0 558.0 292" fill="none" stroke="#ff8c00" stroke-width="1.5" opacity="0.75"/><path d="M332.0 292 A115.0 108.0 0 0 0 562.0 292" fill="none" stroke="#ff3400" stroke-width="2.3" opacity="0.9"/><path d="M328.0 292 A119.0 112.0 0 0 0 566.0 292" fill="none" stroke="#ff8c00" stroke-width="1.5" opacity="0.75"/><path d="M324.0 292 A123.0 116.0 0 0 0 570.0 292" fill="none" stroke="#ff3400" stroke-width="2.3" opacity="0.9"/><path d="M320.0 292 A127.0 120.0 0 0 0 574.0 292" fill="none" stroke="#ff8c00" stroke-width="1.5" opacity="0.75"/></g><path d="M396 370 C398 360 399 350 398 340" stroke="#ff6000" stroke-width="1.5" fill="none"/><rect x="449" y="203" width="35" height="172" fill="#08f488" opacity="0.9"/><rect x="449" y="210" width="35" height="3" fill="#8cff00"/><rect x="449" y="240" width="35" height="2" fill="#10f060" opacity="0.5"/><rect x="449" y="290" width="35" height="85" fill="#38f020" filter="url(#b3)" opacity="0.7"/><rect x="452.5" y="203" width="1.8" height="8" fill="#e8ff00"/><rect x="452.5" y="212" width="1.8" height="8" fill="#e8ff00"/><rect x="452.5" y="220" width="1.8" height="8" fill="#e8ff00"/><rect x="452.5" y="231" width="1.8" height="3" fill="#e8ff00"/><rect x="452.5" y="236" width="1.8" height="3" fill="#e8ff00"/><rect x="452.5" y="243" width="1.8" height="3" fill="#e8ff00"/><rect x="452.5" y="251" width="1.8" height="3" fill="#e8ff00"/><rect x="452.5" y="259" width="1.8" height="3" fill="#e8ff00"/><rect x="452.5" y="266" width="1.8" height="3" fill="#e8ff00"/><rect x="452.5" y="273" width="1.8" height="3" fill="#e8ff00"/><rect x="452.5" y="278" width="1.8" height="3" fill="#e8ff00"/><rect x="452.5" y="284" width="1.8" height="3" fill="#e8ff00"/><rect x="452.5" y="291" width="1.8" height="3" fill="#e8ff00"/><rect x="452.5" y="297" width="1.8" height="3" fill="#e8ff00"/><rect x="452.5" y="304" width="1.8" height="3" fill="#e8ff00"/><rect x="452.5" y="310" width="1.8" height="3" fill="#e8ff00"/><rect x="452.5" y="317" width="1.8" height="3" fill="#e8ff00"/><rect x="456.3" y="203" width="4.4" height="8" fill="#ffc800"/><rect x="456.3" y="212" width="4.4" height="8" fill="#ffc800"/><rect x="456.3" y="222" width="4.4" height="8" fill="#ffc800"/><rect x="456.3" y="232" width="4.4" height="3" fill="#ffc800"/><rect x="456.3" y="238" width="4.4" height="3" fill="#ffc800"/><rect x="456.3" y="244" width="4.4" height="3" fill="#ffc800"/><rect x="456.3" y="251" width="4.4" height="3" fill="#ffc800"/><rect x="456.3" y="259" width="4.4" height="3" fill="#ffc800"/><rect x="456.3" y="267" width="4.4" height="3" fill="#ffc800"/><rect x="456.3" y="273" width="4.4" height="3" fill="#ffc800"/><rect x="456.3" y="279" width="4.4" height="3" fill="#ffc800"/><rect x="456.3" y="284" width="4.4" height="3" fill="#ffc800"/><rect x="456.3" y="291" width="4.4" height="3" fill="#ffc800"/><rect x="456.3" y="296" width="4.4" height="3" fill="#ffc800"/><rect x="456.3" y="301" width="4.4" height="3" fill="#ffc800"/><rect x="456.3" y="306" width="4.4" height="3" fill="#ffc800"/><rect x="456.3" y="311" width="4.4" height="3" fill="#ffc800"/><rect x="463.7" y="203" width="1.8" height="8" fill="#e8ff00"/><rect x="463.7" y="212" width="1.8" height="8" fill="#e8ff00"/><rect x="463.7" y="223" width="1.8" height="8" fill="#e8ff00"/><rect x="463.7" y="234" width="1.8" height="3" fill="#e8ff00"/><rect x="463.7" y="242" width="1.8" height="3" fill="#e8ff00"/><rect x="463.7" y="249" width="1.8" height="3" fill="#e8ff00"/><rect x="463.7" y="254" width="1.8" height="3" fill="#e8ff00"/><rect x="463.7" y="259" width="1.8" height="3" fill="#e8ff00"/><rect x="463.7" y="267" width="1.8" height="3" fill="#e8ff00"/><rect x="463.7" y="272" width="1.8" height="3" fill="#e8ff00"/><rect x="463.7" y="278" width="1.8" height="3" fill="#e8ff00"/><rect x="463.7" y="286" width="1.8" height="3" fill="#e8ff00"/><rect x="463.7" y="292" width="1.8" height="3" fill="#e8ff00"/><rect x="463.7" y="297" width="1.8" height="3" fill="#e8ff00"/><rect x="463.7" y="302" width="1.8" height="3" fill="#e8ff00"/><rect x="463.7" y="310" width="1.8" height="3" fill="#e8ff00"/><rect x="463.7" y="316" width="1.8" height="3" fill="#e8ff00"/><rect x="455" y="203" width="1" height="172" fill="#30f030"/><rect x="451" y="300" width="3" height="3" fill="#ffb000"/><rect x="455" y="296" width="4" height="3" fill="#ff9000"/><rect x="460" y="292" width="3" height="3" fill="#ffb000"/><rect x="466" y="290" width="3" height="3" fill="#ffd000"/><rect x="464" y="305" width="3" height="3" fill="#ffb000"/><rect x="452" y="285" width="3" height="3" fill="#ffd000"/><rect x="467" y="322" width="3" height="4" fill="#ffb000"/><rect x="473" y="330" width="3" height="6" fill="#ffd000"/><rect x="477" y="324" width="3" height="8" fill="#ffe000"/><rect x="470" y="355" width="6" height="5" fill="#ffe000"/><rect x="458" y="360" width="4" height="8" fill="#ffd800"/><rect x="450" y="366" width="5" height="6" fill="#ffc000"/><rect x="462" y="325" width="3" height="3" fill="#ffc000"/><clipPath id="mixclip"><rect x="449" y="280" width="35" height="95"/></clipPath><g clip-path="url(#mixclip)"><path d="M396 292 A51 44 0 0 0 498 292" fill="none" stroke="#ff5a00" stroke-width="2.2" opacity="0.8" stroke-dasharray="3 1.5"/><path d="M380 292 A67 60 0 0 0 514 292" fill="none" stroke="#ff5a00" stroke-width="2.2" opacity="0.8" stroke-dasharray="3 1.5"/><path d="M364 292 A83 76 0 0 0 530 292" fill="none" stroke="#ff5a00" stroke-width="2.2" opacity="0.8" stroke-dasharray="3 1.5"/><path d="M348 292 A99 92 0 0 0 546 292" fill="none" stroke="#ff5a00" stroke-width="2.2" opacity="0.8" stroke-dasharray="3 1.5"/></g><rect x="483" y="203" width="3" height="172" fill="#ffee00"/><rect x="483" y="310" width="3" height="25" fill="#ff4400"/><path d="M455 375 C468 365 476 352 483 335" stroke="#ffc000" stroke-width="3" fill="none" opacity="0.9"/></g><path d="M219.5 197v181M219 197.5h470M688.5 197v181M219 377.5h470" stroke="#000" stroke-width="1" fill="none"/><path d="M220.5 378v5M220.5 622v5M238.5 378v11M238.5 622v11M256.5 378v5M256.5 622v5M274.5 378v5M274.5 622v5M292.5 378v5M292.5 622v5M310.5 378v5M310.5 622v5M328.5 378v5M328.5 622v5M346.5 378v5M346.5 622v5M364.5 378v5M364.5 622v5M382.5 378v5M382.5 622v5M400.5 378v5M400.5 622v5M418.5 378v5M418.5 622v5M436.5 378v5M436.5 622v5M454.5 378v11M454.5 622v11M472.5 378v5M472.5 622v5M490.5 378v5M490.5 622v5M508.5 378v5M508.5 622v5M526.5 378v5M526.5 622v5M544.5 378v5M544.5 622v5M562.5 378v5M562.5 622v5M580.5 378v5M580.5 622v5M598.5 378v5M598.5 622v5M616.5 378v5M616.5 622v5M634.5 378v5M634.5 622v5M652.5 378v5M652.5 622v5M670.5 378v11M670.5 622v11M688.5 378v5M688.5 622v5" stroke="#000" stroke-width="1"/><path d="M208 374.5h11M214 344.5h5M214 326.5h5M214 314.5h5M214 304.5h5M214 296.5h5M214 289.5h5M214 283.5h5M214 278.5h5M208 273.5h11M214 243.5h5M214 225.5h5M214 213.5h5M214 203.5h5" stroke="#000" stroke-width="1"/><rect x="704" y="198" width="16" height="179" fill="url(#cb)" shape-rendering="auto"/><path d="M720.5 198v180M704 377.5h17" stroke="#000"/><path d="M721 204.5h5M721 217.5h11M721 230.5h5M721 244.5h11M721 257.5h5M721 270.5h11M721 284.5h5M721 297.5h11M721 310.5h5M721 324.5h11M721 337.5h5M721 350.5h11M721 364.5h5M721 377.5h11" stroke="#000" stroke-width="1"/><path d="M219.5 440v182M219 440.5h470M688.5 440v182M219 621.5h470" stroke="#000" stroke-width="1" fill="none"/><path d="M214 621.5h5M208 599.5h11M214 580.5h5M208 562.5h11M214 545.5h5M208 529.5h11M214 514.5h5M208 500.5h11M214 487.5h5M208 475.5h11M214 463.5h5M208 451.5h11M214 440.5h5" stroke="#000" stroke-width="1"/><path d="M219.5 486V527M220.5 481V502M221.5 483V516M222.5 474V509M223.5 479V514M224.5 477V496M225.5 477V498M226.5 468V502M227.5 469V490M228.5 477V496M229.5 468V496M230.5 474V496M231.5 462V492M232.5 464V490M233.5 456V495M234.5 460V483M235.5 480V500M236.5 474V503M237.5 475V511M238.5 482V509M239.5 486V505M240.5 493V517M241.5 497V521M242.5 499V525M243.5 509V524M244.5 508V535M245.5 511V528M246.5 513V539M247.5 528V538M248.5 523V541M249.5 528V545M250.5 529V546M251.5 530V550M252.5 542V550M253.5 536V552M254.5 541V553M255.5 549V557M256.5 547V558M257.5 555V563M258.5 557V563M259.5 559V565M260.5 559V565M261.5 557V566M262.5 555V559M263.5 555V563M264.5 556V564M265.5 553V559M266.5 554V560M267.5 555V566M268.5 559V569M269.5 560V569M270.5 562V571M271.5 563V573M272.5 565V575M273.5 567V576M274.5 569V577M275.5 572V577M276.5 572V579M277.5 568V577M278.5 569V579M279.5 570V580M280.5 569V581M281.5 568V574M282.5 573V581M283.5 570V581M284.5 570V579M285.5 575V579M286.5 567V577M287.5 574V580M288.5 568V581M289.5 569V577M290.5 571V577M291.5 566V581M292.5 566V575M293.5 567V578M294.5 563V579M295.5 563V577M296.5 561V575M297.5 557V577M298.5 554V572M299.5 552V578M300.5 549V578M301.5 554V570M302.5 559V567M303.5 546V560M304.5 544V564M305.5 542V562M306.5 544V560M307.5 541V563M308.5 550V560M309.5 544V562M310.5 543V560M311.5 545V562M312.5 546V557M313.5 548V565M314.5 560V566M315.5 551V568M316.5 548V560M317.5 546V557M318.5 545V559M319.5 541V559M320.5 538V557M321.5 536V553M322.5 534V545M323.5 528V545M324.5 519V539M325.5 512V535M326.5 506V533M327.5 503V527M328.5 495V520M329.5 488V517M330.5 483V516M331.5 488V516M332.5 472V505M333.5 469V508M334.5 474V498M335.5 459V490M336.5 459V484M337.5 463V492M338.5 473V487M339.5 472V495M340.5 470V491M341.5 481V499M342.5 478V501M343.5 476V500M344.5 476V501M345.5 471V504M346.5 472V504M347.5 470V497M348.5 472V505M349.5 483V506M350.5 472V510M351.5 493V516M352.5 485V516M353.5 486V519M354.5 494V526M355.5 495V529M356.5 503V529M357.5 502V545M358.5 515V556M359.5 535V551M360.5 530V580M372.5 521V550M373.5 513V538M374.5 499V521M375.5 487V508M376.5 482V504M377.5 482V503M378.5 477V504M379.5 483V502M380.5 487V499M381.5 480V501M382.5 477V498M383.5 479V501M384.5 471V487M385.5 466V496M386.5 469V482M387.5 461V490M388.5 456V483M389.5 449V487M390.5 461V494M391.5 473V499M392.5 480V502M393.5 486V520M394.5 484V520M395.5 474V491M396.5 448V479M397.5 455V477M398.5 465V485M399.5 475V491M400.5 464V491M401.5 470V499M402.5 473V491M403.5 477V496M404.5 478V504M405.5 495V504M406.5 486V504M407.5 487V496M408.5 480V497M409.5 481V496M410.5 474V495M411.5 468V491M412.5 468V491M413.5 479V492M414.5 473V492M415.5 479V494M416.5 477V492M417.5 480V499M418.5 482V497M419.5 482V502M420.5 482V503M421.5 482V505M422.5 484V501M423.5 487V499M424.5 495V506M425.5 502V506M426.5 491V503M427.5 495V506M428.5 495V511M429.5 492V512M430.5 494V511M431.5 502V510M432.5 495V515M433.5 494V502M434.5 498V509M435.5 496V510M436.5 498V513M437.5 499V512M438.5 493V514M439.5 497V507M440.5 499V510M441.5 494V513M442.5 490V510M443.5 493V508M444.5 503V509M445.5 499V512M446.5 492V502M447.5 492V509M448.5 499V512M449.5 493V511M450.5 493V511M451.5 499V511M452.5 495V510M453.5 494V500M454.5 492V504M455.5 484V508M456.5 481V504M457.5 494V502M458.5 481V504M459.5 471V500M460.5 477V493M461.5 480V505M462.5 482V507M463.5 487V513M464.5 487V512M465.5 490V519M466.5 493V515M467.5 501V524M468.5 499V521M469.5 501V515M470.5 505V523M471.5 513V533M472.5 512V533M473.5 509V526M474.5 496V522M475.5 495V520M476.5 499V517M477.5 490V516M478.5 493V518M479.5 489V512M480.5 494V516M481.5 493V519M482.5 489V522M483.5 492V528M484.5 500V532M485.5 501V541M486.5 512V542M487.5 519V559M488.5 530V559M489.5 513V548M490.5 510V538M491.5 506V538M492.5 501V536M493.5 494V521M494.5 493V523M495.5 501V518M496.5 489V509M497.5 484V514M498.5 488V513M499.5 481V516M500.5 484V514M501.5 479V509M502.5 478V511M503.5 481V508M504.5 482V512M505.5 479V504M506.5 483V504M507.5 478V508M508.5 477V503M509.5 472V491M510.5 459V489M511.5 459V502M512.5 474V509M513.5 482V502M514.5 484V502M515.5 496V518M516.5 502V525M517.5 496V527M518.5 520V526M519.5 509V532M520.5 510V527M521.5 526V551M522.5 532V564M534.5 538V570M535.5 521V552M536.5 506V536M537.5 500V525M538.5 501V518M539.5 493V526M540.5 493V521M541.5 486V516M542.5 485V519M543.5 489V510M544.5 490V503M545.5 469V509M546.5 486V510M547.5 483V511M548.5 480V500M549.5 463V486M550.5 477V511M551.5 481V517M552.5 508V527M553.5 498V521M554.5 503V519M555.5 518V538M556.5 515V537M557.5 519V542M558.5 523V545M559.5 525V541M560.5 526V556M561.5 533V553M562.5 538V562M563.5 532V560M564.5 539V572M565.5 545V555M566.5 546V594M567.5 552V594M568.5 564V589M569.5 565V596M570.5 559V593M571.5 563V602M572.5 564V599M573.5 570V601M574.5 574V598M575.5 576V600M576.5 572V599M577.5 576V600M578.5 576V600M579.5 574V603M580.5 579V595M581.5 578V599M582.5 579V601M583.5 580V605M584.5 578V588M585.5 579V599M586.5 577V600M587.5 581V606M588.5 582V599M589.5 583V604M590.5 582V602M591.5 583V605M592.5 588V610M593.5 584V594M594.5 589V610M595.5 587V607M596.5 588V604M597.5 582V614M598.5 586V612M599.5 582V609M600.5 581V605M601.5 578V609M602.5 583V601M603.5 581V606M604.5 578V605M605.5 589V597M606.5 577V599M607.5 572V599M608.5 572V598M609.5 581V586M610.5 576V599M611.5 574V596M612.5 573V595M613.5 578V596M614.5 572V593M615.5 579V595M616.5 574V594M617.5 572V592M618.5 572V583M619.5 572V585M620.5 571V585M621.5 568V587M622.5 571V581M623.5 567V584M624.5 568V581M625.5 565V578M626.5 564V580M627.5 562V580M628.5 562V572M629.5 556V575M630.5 555V571M631.5 553V569M632.5 551V571M633.5 543V558M634.5 538V563M635.5 541V548M636.5 530V556M637.5 526V547M638.5 515V547M639.5 515V549M640.5 524V555M641.5 529V565M642.5 547V568M643.5 544V576M644.5 545V584M645.5 549V574M646.5 556V584M647.5 554V581M648.5 558V584M649.5 553V586M650.5 561V585M651.5 554V591M652.5 556V580M653.5 571V585M654.5 557V580M655.5 553V584M656.5 559V588M657.5 552V582M658.5 546V572M659.5 548V566M660.5 533V555M661.5 529V557M662.5 521V538M663.5 526V552M664.5 514V544M665.5 516V541M666.5 514V538M667.5 500V540M668.5 496V535M669.5 498V594M670.5 492V594M671.5 493V535M672.5 495V522M673.5 491V532M674.5 490V535M675.5 493V517M676.5 515V534M677.5 491V534M678.5 492V535M679.5 499V510M680.5 501V531M681.5 505V533M682.5 521V542M683.5 532V550M684.5 549V574" stroke="#000" stroke-width="1" fill="none" shape-rendering="crispEdges"/></svg><svg width="1345" height="916" viewBox="0 0 1345 916"><g stroke="#fff" stroke-width="0.2"><text transform="translate(316.19,187.00) scale(0.9194,1)" font-size="17.83" font-weight="normal" fill="#000">RBSP-A/EMFISIS  HFR Spectra Data</text><text transform="translate(173.50,282.90) scale(1.0322,1)" font-size="16.86" font-weight="normal" fill="#000">10</text><text transform="translate(193.53,275.10) scale(0.9604,1)" font-size="17.54" font-weight="normal" fill="#000">5</text><text transform="translate(173.51,383.90) scale(1.0118,1)" font-size="17.00" font-weight="normal" fill="#000">10</text><text transform="translate(193.65,375.80) scale(1.0104,1)" font-size="17.25" font-weight="normal" fill="#000">4</text><text transform="translate(161.00,298.30) rotate(-90) scale(1.0076,1)" font-size="17.39" font-weight="normal" fill="#000">Hz</text><text transform="translate(736.40,226.80) scale(1.0410,1)" font-size="16.71" font-weight="normal" fill="#000">10</text><text transform="translate(756.20,218.70) scale(1.0607,1)" font-size="16.71" font-weight="normal" fill="#000">-10</text><text transform="translate(736.40,253.45) scale(1.0410,1)" font-size="16.71" font-weight="normal" fill="#000">10</text><text transform="translate(756.21,245.35) scale(1.0459,1)" font-size="16.71" font-weight="normal" fill="#000">-12</text><text transform="translate(736.40,280.10) scale(1.0410,1)" font-size="16.71" font-weight="normal" fill="#000">10</text><text transform="translate(756.22,272.00) scale(1.0306,1)" font-size="16.71" font-weight="normal" fill="#000">-14</text><text transform="translate(736.40,306.75) scale(1.0410,1)" font-size="16.71" font-weight="normal" fill="#000">10</text><text transform="translate(756.22,298.65) scale(1.0382,1)" font-size="16.71" font-weight="normal" fill="#000">-16</text><text transform="translate(736.40,333.40) scale(1.0410,1)" font-size="16.71" font-weight="normal" fill="#000">10</text><text transform="translate(756.22,325.30) scale(1.0382,1)" font-size="16.71" font-weight="normal" fill="#000">-18</text><text transform="translate(736.40,360.05) scale(1.0410,1)" font-size="16.71" font-weight="normal" fill="#000">10</text><text transform="translate(756.20,351.95) scale(1.0607,1)" font-size="16.71" font-weight="normal" fill="#000">-20</text><text transform="translate(736.40,386.70) scale(1.0410,1)" font-size="16.71" font-weight="normal" fill="#000">10</text><text transform="translate(756.21,378.60) scale(1.0459,1)" font-size="16.71" font-weight="normal" fill="#000">-22</text><text transform="translate(805.70,338.80) rotate(-90) scale(1.0947,1)" font-size="17.68" font-weight="normal" fill="#000">V^2/m^2/Hz</text><text transform="translate(215.98,408.80) scale(1.0528,1)" font-size="17.00" font-weight="normal" fill="#000">00:00</text><text transform="translate(215.81,424.90) scale(1.0463,1)" font-size="17.00" font-weight="normal" fill="#000">2012-12-02</text><text transform="translate(647.99,408.90) scale(1.0683,1)" font-size="16.71" font-weight="normal" fill="#000">00:00</text><text transform="translate(647.80,424.90) scale(1.0775,1)" font-size="16.71" font-weight="normal" fill="#000">2012-12-03</text><text transform="translate(294.54,414.10) scale(0.9167,1)" font-size="17.25" font-weight="normal" fill="#000">RBSP-</text><text transform="translate(342.80,414.10) scale(1.0638,1)" font-size="17.25" font-weight="normal" fill="#000">A</text><text transform="translate(577.68,414.00) scale(0.9495,1)" font-size="17.10" font-weight="normal" fill="#000">Tpar</text><text transform="translate(177.94,456.96) scale(1.0343,1)" font-size="16.71" font-weight="normal" fill="#000">2.2</text><text transform="translate(177.91,480.23) scale(1.0682,1)" font-size="16.71" font-weight="normal" fill="#000">2.0</text><text transform="translate(178.48,505.96) scale(1.0511,1)" font-size="16.71" font-weight="normal" fill="#000">1.8</text><text transform="translate(178.48,534.72) scale(1.0511,1)" font-size="16.71" font-weight="normal" fill="#000">1.6</text><text transform="translate(178.46,567.33) scale(1.0662,1)" font-size="16.71" font-weight="normal" fill="#000">1.4</text><text transform="translate(178.52,604.98) scale(1.0216,1)" font-size="16.71" font-weight="normal" fill="#000">1.2</text><text transform="translate(166.00,580.38) rotate(-90) scale(0.9777,1)" font-size="17.39" font-weight="normal" fill="#000">e Tperp/Tpar</text><text transform="translate(215.88,653.20) scale(1.0690,1)" font-size="16.86" font-weight="normal" fill="#000">00:00</text><text transform="translate(215.97,673.10) scale(1.0690,1)" font-size="16.86" font-weight="normal" fill="#000">4.225</text><text transform="translate(199.84,692.90) scale(1.0690,1)" font-size="16.86" font-weight="normal" fill="#000">-10.580</text><text transform="translate(216.15,712.80) scale(1.0690,1)" font-size="16.86" font-weight="normal" fill="#000">2.247</text><text transform="translate(215.97,732.70) scale(1.0690,1)" font-size="16.86" font-weight="normal" fill="#000">4.373</text><text transform="translate(431.98,653.20) scale(1.0690,1)" font-size="16.86" font-weight="normal" fill="#000">12:00</text><text transform="translate(432.07,673.10) scale(1.0690,1)" font-size="16.86" font-weight="normal" fill="#000">5.756</text><text transform="translate(425.85,692.90) scale(1.0690,1)" font-size="16.86" font-weight="normal" fill="#000">-1.544</text><text transform="translate(432.07,712.80) scale(1.0690,1)" font-size="16.86" font-weight="normal" fill="#000">5.398</text><text transform="translate(431.98,732.70) scale(1.0690,1)" font-size="16.86" font-weight="normal" fill="#000">5.760</text><text transform="translate(647.98,653.20) scale(1.0690,1)" font-size="16.86" font-weight="normal" fill="#000">00:00</text><text transform="translate(648.16,673.10) scale(1.0690,1)" font-size="16.86" font-weight="normal" fill="#000">3.179</text><text transform="translate(631.94,692.90) scale(1.0690,1)" font-size="16.86" font-weight="normal" fill="#000">-16.190</text><text transform="translate(648.07,712.80) scale(1.0690,1)" font-size="16.86" font-weight="normal" fill="#000">8.125</text><text transform="translate(648.25,732.70) scale(1.0690,1)" font-size="16.86" font-weight="normal" fill="#000">3.447</text><text transform="translate(155.39,673.00) scale(1.1894,1)" font-size="16.96" font-weight="normal" fill="#000">R</text><g stroke="none"><text transform="translate(167.72,677.80) scale(1.0406,1)" font-size="10.58" font-weight="normal" fill="#000">E</text></g><text transform="translate(137.16,692.90) scale(0.9805,1)" font-size="17.10" font-weight="normal" fill="#000">MLat</text><text transform="translate(143.58,713.10) scale(0.9436,1)" font-size="17.54" font-weight="normal" fill="#000">MLT</text><text transform="translate(164.74,733.00) scale(1.0380,1)" font-size="17.54" font-weight="normal" fill="#000">L</text><text transform="translate(251.50,757.10) scale(1.0435,1)" font-size="17.29" font-weight="normal" fill="#000">2012-12-01 (336) 23:00 to 2012-12-03 (338) 01:00</text></g></svg><div class="a" style="left:346px;top:358px;width:246px;height:89px;background:#dadada;border:1px solid #9a9a9a;border-radius:5px 5px 0 0"></div><div class="a" style="left:347px;top:359px;width:244px;height:25px;background:linear-gradient(#f2f2f2,#d2d2d2);border-radius:4px 4px 0 0"></div><div class="a" style="left:349px;top:384px;width:240px;height:61px;background:#fdfdfd"></div><div class="a" style="left:349px;top:411px;width:220px;height:20px;background:#eeeeee;border:1px solid #7a8898;border-left:2px solid #6a8ac4"></div><div class="a" style="left:351px;top:412px;width:40px;height:18px;background:#a2b6cc"></div><div class="a" style="left:569px;top:411px;width:20px;height:20px;background:linear-gradient(#fafcfe,#d4e2f0);border:1px solid #7a8898"></div><div class="a" style="left:572px;top:414px;width:14px;height:14px;background:linear-gradient(#f8b0b8,#e45060 45%,#d83848);border:1px solid #c02838;border-radius:3px"></div><svg width="1345" height="916" viewBox="0 0 1345 916"><path d="M575.8 417.8l6.4 6.4M582.2 417.8l-6.4 6.4" stroke="#fff" stroke-width="1.9"/><path d="M359.5 369h9l-4.5 5.2z" fill="#9a9a9a"/><path d="M569.5 369.5l7 7M576.5 369.5l-7 7" stroke="#9c9c9c" stroke-width="2"/><text transform="translate(411.00,377.60) scale(1.0514,1)" font-size="13.19" font-weight="bold" fill="#7c7c7c">Progress Monitor</text><g stroke="#1e1e2a" stroke-width="0.55"><text transform="translate(413.21,396.60) scale(1.2443,1)" font-size="14.76" font-weight="normal" fill="#1e1e2a">running batch</text></g><g stroke="#1e1e2a" stroke-width="0.3"><text transform="translate(363.40,409.20) scale(1.3176,1)" font-size="8.00" font-weight="normal" fill="#1e1e2a">write /hom...walk3/product_20121206_12.png</text></g><g stroke="#1e1e2a" stroke-width="0.5"><text transform="translate(375.26,443.00) scale(1.1990,1)" font-size="12.71" font-weight="normal" fill="#1e1e2a">12/62 (51.7/min, eta 59.2 s)</text></g></svg></body></html>
